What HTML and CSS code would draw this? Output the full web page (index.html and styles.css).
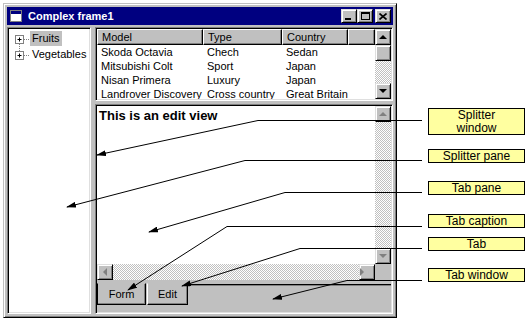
FILE: index.html
```html
<!DOCTYPE html>
<html lang="en">
<head>
  <meta charset="UTF-8">
  <title>Complex frame1</title>
  <link rel="stylesheet" href="styles.css">
</head>
<body>

  <div class="page">
    <div class="window">
      <div class="titlebar">
        <svg class="app-icon" width="12" height="12" viewBox="0 0 12 12">
          <rect x="0.5" y="0.5" width="11" height="11" fill="#fff" stroke="#808080"/>
          <rect x="1" y="1" width="10" height="3" fill="#000080"/>
        </svg>
        <span class="title">Complex frame1</span>
        <div class="title-buttons">
          <span class="tbtn"><svg width="8" height="7"><rect x="0" y="5" width="6" height="2" fill="#000"/></svg></span>
          <span class="tbtn"><svg width="9" height="9"><rect x="0.5" y="0.5" width="8" height="7" fill="none" stroke="#000"/><rect x="0" y="0" width="9" height="2" fill="#000"/></svg></span>
          <span class="tbtn close"><svg width="8" height="7"><path d="M0.5 0.5 L7.5 6.5 M7.5 0.5 L0.5 6.5" stroke="#000" stroke-width="1.6"/></svg></span>
        </div>
      </div>

      <div class="client">
        <div class="tree sunken">
          <div class="tree-item">
            <svg class="expander" width="21" height="16" viewBox="0 0 21 16">
              <rect x="6.5" y="5.5" width="8" height="8" fill="#fff" stroke="#808080"/>
              <path d="M8.5 9.5 H12.5 M10.5 7.5 V11.5" stroke="#000"/>
              <path d="M15 9.5 H21" stroke="#808080" stroke-dasharray="1 1"/>
              <path d="M10.5 14 V22" stroke="#808080" stroke-dasharray="1 1"/>
            </svg>
            <span class="label selected">Fruits</span>
          </div>
          <div class="tree-item">
            <svg class="expander" width="21" height="16" viewBox="0 0 21 16">
              <rect x="6.5" y="5.5" width="8" height="8" fill="#fff" stroke="#808080"/>
              <path d="M8.5 9.5 H12.5 M10.5 7.5 V11.5" stroke="#000"/>
              <path d="M15 9.5 H21" stroke="#808080" stroke-dasharray="1 1"/>
            </svg>
            <span class="label">Vegetables</span>
          </div>
        </div>

        <div class="right">
          <div class="listview sunken">
            <div class="list-body">
              <div class="list-header">
                <span class="hcol c1">Model</span>
                <span class="hcol c2">Type</span>
                <span class="hcol c3">Country</span>
                <span class="hcol c4"></span>
              </div>
              <div class="list-row"><span class="c1">Skoda Octavia</span><span class="c2">Chech</span><span class="c3">Sedan</span></div>
              <div class="list-row"><span class="c1">Mitsubishi Colt</span><span class="c2">Sport</span><span class="c3">Japan</span></div>
              <div class="list-row"><span class="c1">Nisan Primera</span><span class="c2">Luxury</span><span class="c3">Japan</span></div>
              <div class="list-row"><span class="c1">Landrover Discovery</span><span class="c2">Cross country</span><span class="c3">Great Britain</span></div>
            </div>
            <div class="vscroll">
              <div class="sbtn"><span class="arrow up"></span></div>
              <div class="sbtn thumb"></div>
              <div class="track"></div>
              <div class="sbtn"><span class="arrow down"></span></div>
            </div>
          </div>

          <div class="tabwindow sunken">
            <div class="edit-row">
              <div class="edit">This is an edit view</div>
              <div class="vscroll">
                <div class="sbtn"><span class="arrow up off"></span></div>
                <div class="track"></div>
                <div class="sbtn"><span class="arrow down off"></span></div>
              </div>
            </div>
            <div class="hscroll-row">
              <div class="hscroll">
                <div class="sbtn"><span class="arrow left off"></span></div>
                <div class="track"></div>
                <div class="sbtn"><span class="arrow right off"></span></div>
              </div>
              <div class="corner"></div>
            </div>
            <div class="tabstrip">
              <div class="tab form">Form</div>
              <div class="tab current">Edit</div>
              <div class="tab-rest"></div>
            </div>
          </div>
        </div>
      </div>
    </div>

    <div class="callouts">
      <div class="callout two-line">Splitter<br>window</div>
      <div class="callout c-pane">Splitter pane</div>
      <div class="callout c-tabpane">Tab pane</div>
      <div class="callout c-caption">Tab caption</div>
      <div class="callout c-tab">Tab</div>
      <div class="callout c-tabwin">Tab window</div>
    </div>

    <!-- pointer lines from the notes to the parts -->
    <svg class="pointers" width="531" height="322" viewBox="0 0 531 322">
      <defs>
        <marker id="head" markerUnits="userSpaceOnUse" markerWidth="10" markerHeight="6" refX="9" refY="3" orient="auto">
          <path d="M0 0 L10 3 L0 6 z" fill="#000"/>
        </marker>
      </defs>
      <g fill="none" stroke="#000" stroke-width="1" marker-end="url(#head)">
        <polyline points="422,120.5 258,120.5 97,155"/>
        <polyline points="422,160.5 245,160.5 67,207"/>
        <polyline points="422,192.5 285,192.5 149,232"/>
        <polyline points="422,226.5 227,226.5 128,290"/>
        <polyline points="422,248.5 300,248.5 182,286"/>
        <polyline points="422,280.5 347,280.5 273,299"/>
      </g>
    </svg>
  </div>

</body>
</html>
```

FILE: styles.css
```css
body {
  margin: 0;
  background-color: #fff;
  font-family: "Liberation Sans", Arial, sans-serif;
  font-size: 11px;
  color: #000;
}
.page {
  position: relative;
  display: flex;
  align-items: flex-start;
  width: 531px;
  height: 322px;
  padding: 3px 0 0 3px;
  box-sizing: border-box;
}
.window {
  width: 394px;
  height: 315px;
  box-sizing: border-box;
  padding: 3px;
  background-color: #c0c0c0;
  border: 1px solid;
  border-color: #c0c0c0 #000 #000 #c0c0c0;
  box-shadow: inset 1px 1px #fff, inset -1px -1px #808080;
  display: flex;
  flex-direction: column;
}
.titlebar {
  height: 18px;
  background-color: #000080;
  display: flex;
  align-items: center;
  flex-shrink: 0;
}
.app-icon {
  margin-left: 3px;
}
.title {
  margin-left: 6px;
  color: #fff;
  font-weight: bold;
  font-size: 11px;
}
.title-buttons {
  margin-left: auto;
  margin-right: 2px;
  display: flex;
}
.tbtn {
  width: 16px;
  height: 14px;
  box-sizing: border-box;
  background-color: #c0c0c0;
  border: 1px solid;
  border-color: #dfdfdf #000 #000 #dfdfdf;
  box-shadow: inset 1px 1px #fff, inset -1px -1px #808080;
  display: flex;
  align-items: center;
  justify-content: center;
}
.tbtn.close {
  margin-left: 2px;
}
.client {
  flex: 1;
  margin-top: 2px;
  display: flex;
  gap: 4px;
  min-height: 0;
}
.sunken {
  box-sizing: border-box;
  border: 1px solid;
  border-color: #808080 #fff #fff #808080;
  padding: 1px;
  box-shadow: inset 1px 1px #000, inset -1px -1px #dfdfdf;
}
.tree {
  width: 84px;
  background-color: #fff;
  padding-top: 2px;
}
.tree-item {
  height: 16px;
  display: flex;
  align-items: center;
}
.expander {
  overflow: visible;
  flex-shrink: 0;
}
.label {
  padding: 1px 2px;
  line-height: 13px;
}
.label.selected {
  background-color: #c0c0c0;
}
.right {
  flex: 1;
  display: flex;
  flex-direction: column;
  gap: 3px;
}
.listview {
  height: 74px;
  flex-shrink: 0;
  background-color: #fff;
  display: flex;
  overflow: hidden;
}
.list-body {
  flex: 1;
  overflow: hidden;
}
.list-header {
  display: flex;
  height: 16px;
}
.hcol {
  box-sizing: border-box;
  height: 16px;
  line-height: 14px;
  padding-left: 4px;
  background-color: #c0c0c0;
  border: 1px solid;
  border-color: #fff #000 #000 #fff;
  box-shadow: inset -1px -1px #808080;
}
.c1 {
  width: 106px;
  flex-shrink: 0;
}
.c2 {
  width: 79px;
  flex-shrink: 0;
}
.c3 {
  width: 66px;
  flex-shrink: 0;
}
.c4 {
  flex: 1;
}
.list-row {
  display: flex;
  height: 14px;
  line-height: 14px;
  white-space: nowrap;
}
.list-row span {
  padding-left: 4px;
  box-sizing: border-box;
}
.vscroll {
  width: 16px;
  flex-shrink: 0;
  display: flex;
  flex-direction: column;
}
.sbtn {
  width: 16px;
  height: 16px;
  flex-shrink: 0;
  box-sizing: border-box;
  background-color: #c0c0c0;
  border: 1px solid;
  border-color: #dfdfdf #000 #000 #dfdfdf;
  box-shadow: inset 1px 1px #fff, inset -1px -1px #808080;
  display: flex;
  align-items: center;
  justify-content: center;
}
.track {
  flex: 1;
  background-color: #fff;
  background-image: repeating-conic-gradient(#c0c0c0 0 25%, #fff 0 50%);
  background-size: 2px 2px;
}
.arrow {
  width: 0;
  height: 0;
  border: 4px solid transparent;
}
.arrow.up {
  border-top-width: 0;
  border-bottom-color: #000;
}
.arrow.down {
  border-bottom-width: 0;
  border-top-color: #000;
}
.arrow.left {
  border-left-width: 0;
  border-right-color: #808080;
}
.arrow.right {
  border-right-width: 0;
  border-left-color: #808080;
}
.arrow.up.off {
  border-bottom-color: #808080;
}
.arrow.down.off {
  border-top-color: #808080;
}
.tabwindow {
  flex: 1;
  background-color: #c0c0c0;
  display: flex;
  flex-direction: column;
}
.edit-row {
  flex: 1;
  display: flex;
  min-height: 0;
}
.edit {
  flex: 1;
  background-color: #fff;
  font-size: 13px;
  font-weight: bold;
  padding: 2px 0 0 2px;
}
.hscroll-row {
  display: flex;
  height: 16px;
  flex-shrink: 0;
}
.hscroll {
  flex: 1;
  display: flex;
}
.corner {
  width: 16px;
  background-color: #c0c0c0;
}
.tabstrip {
  height: 32px;
  flex-shrink: 0;
  display: flex;
  align-items: flex-start;
  padding-top: 3px;
  box-sizing: border-box;
}
.tab {
  height: 22px;
  box-sizing: border-box;
  line-height: 20px;
  text-align: center;
  font-size: 11px;
  background-color: #c0c0c0;
  border: 1px solid;
}
.tab.form {
  width: 49px;
  border-color: #c0c0c0 #000 #000 #000;
  box-shadow: inset -1px -1px #808080;
}
.tab.current {
  width: 41px;
  margin-left: 1px;
  border-color: #c0c0c0 #000 #000 #fff;
  box-shadow: inset -1px -1px #808080;
}
.tab-rest {
  flex: 1;
  margin-top: 1px;
  height: 2px;
  border-top: 1px solid #000;
  box-shadow: inset 0 1px #808080;
}
.callouts {
  margin-left: 31px;
  width: 97px;
  display: flex;
  flex-direction: column;
}
.callout {
  box-sizing: border-box;
  height: 14px;
  line-height: 12px;
  background-color: #ffffa0;
  border: 1px solid #000;
  text-align: center;
  font-size: 12px;
}
.callout.two-line {
  height: 27px;
  line-height: 12.5px;
  margin-top: 105px;
}
.c-pane {
  margin-top: 14px;
}
.c-tabpane {
  margin-top: 18px;
}
.c-caption {
  margin-top: 19px;
}
.c-tab {
  margin-top: 9px;
}
.c-tabwin {
  margin-top: 17px;
}
.pointers {
  position: absolute;
  top: 0;
  left: 0;
  pointer-events: none;
}
```
